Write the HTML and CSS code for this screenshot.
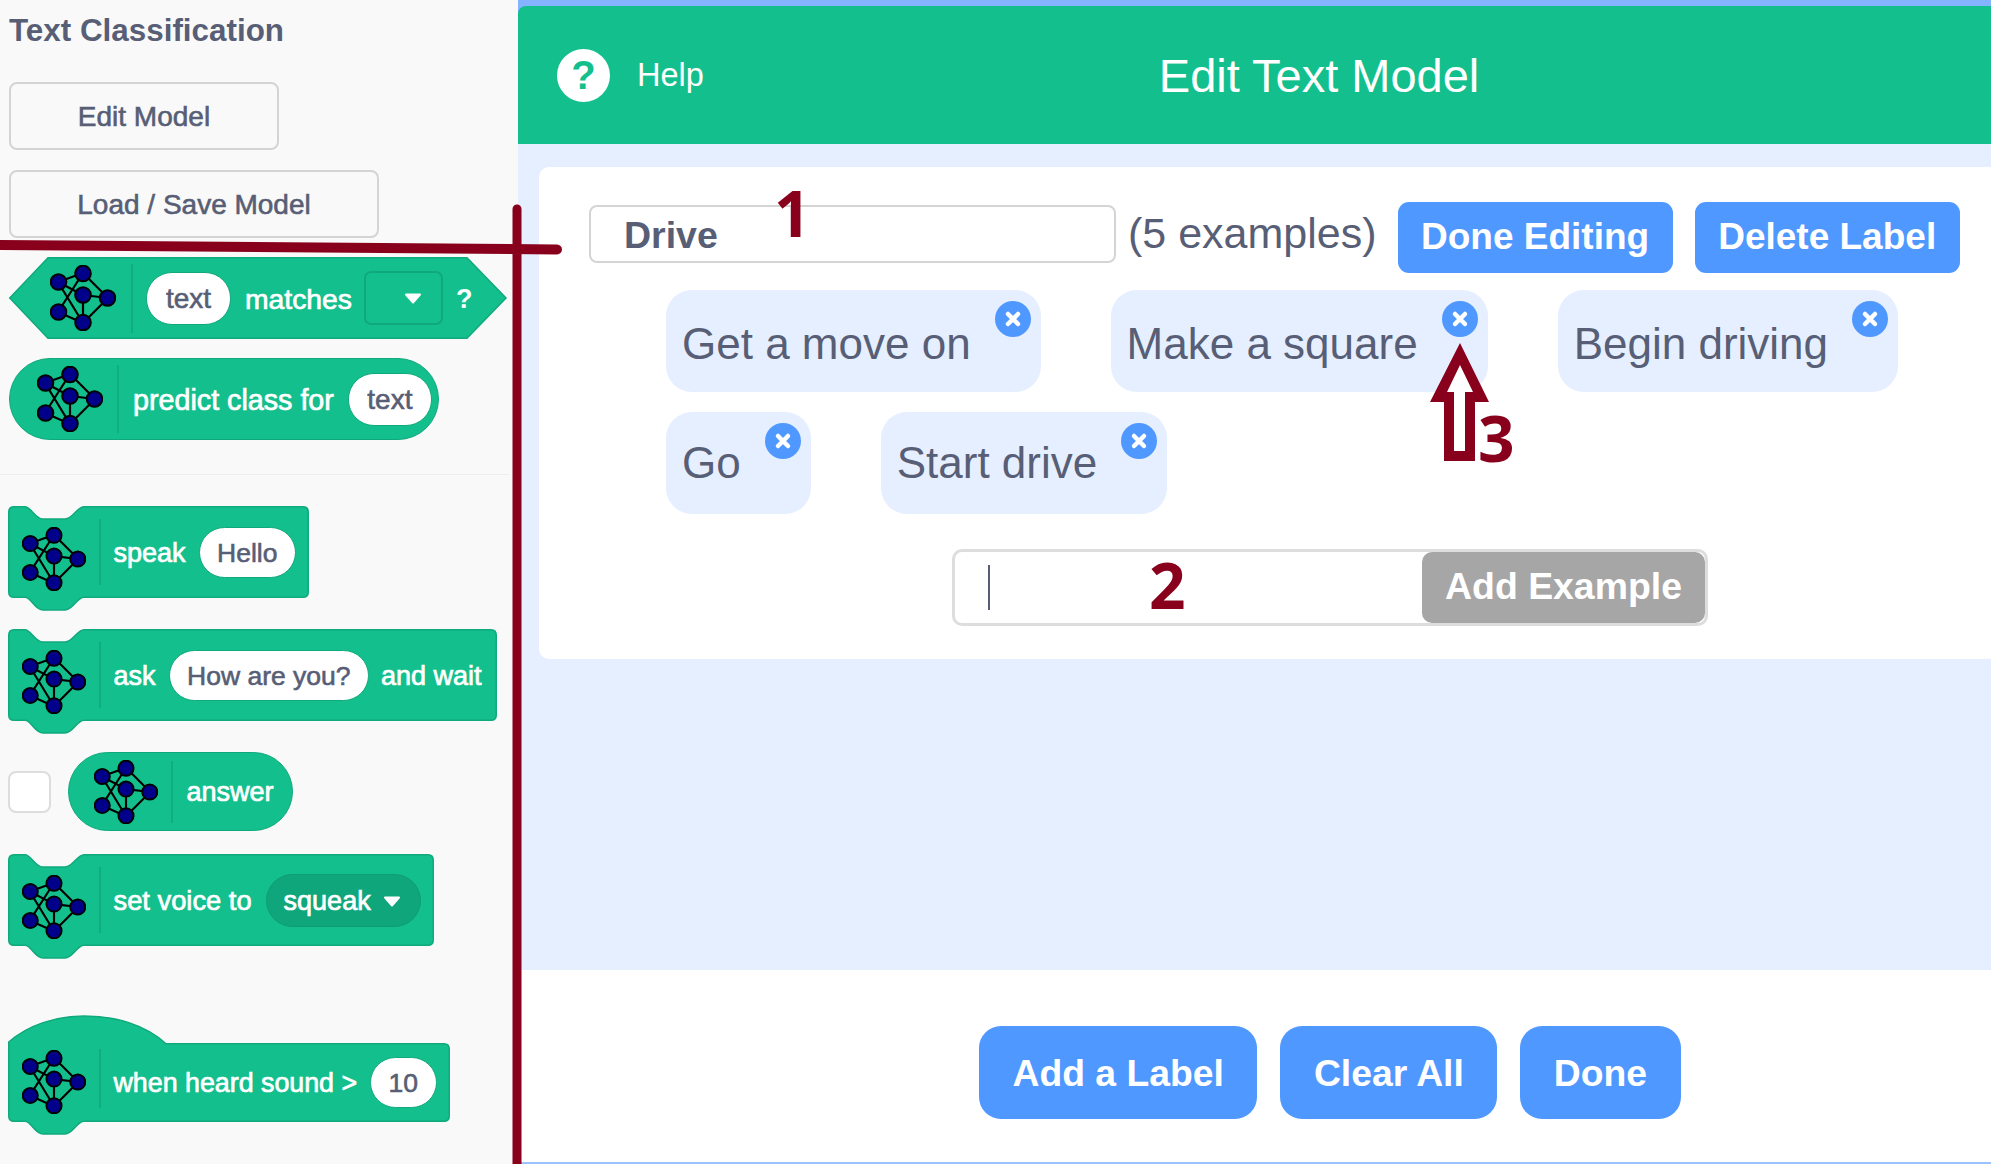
FILE: index.html
```html
<!doctype html>
<html lang="en">

<head>
    <meta charset="UTF-8">
    <meta name="viewport" content="width=device-width, initial-scale=1.0">
    <title>Edit Text Model</title>
    <link rel="stylesheet" href="styles.css">
</head>

<body>
    <svg class="defs" width="0" height="0">
        <symbol id="net" viewBox="0 0 66 66">
            <g stroke="#000" stroke-width="2.200" fill="none">
                <path d="M8 17L33 8M8 17L33 30M8 17L33 58M33 8L8 47M33 8L58 33M33 30L58 33M33 30V58M8 47L33 58M58 33L33 58" />
            </g>
            <g fill="#00008b" stroke="#000" stroke-width="2">
                <circle cx="8.500" cy="17" r="7.800" />
                <circle cx="33" cy="8.500" r="7.800" />
                <circle cx="33" cy="30" r="7.800" />
                <circle cx="57.500" cy="33" r="7.800" />
                <circle cx="8.500" cy="47" r="7.800" />
                <circle cx="33" cy="57.500" r="7.800" />
            </g>
        </symbol>
        <symbol id="caret" viewBox="0 0 18 11">
            <path d="M2 1.500H16L9 9.500Z" fill="#fff" stroke="#fff" stroke-width="2" stroke-linejoin="round" />
        </symbol>
        <symbol id="cross" viewBox="0 0 36 36">
            <circle cx="18" cy="18" r="18" fill="#4f98ff" />
            <path d="M13 13L23 23M23 13L13 23" stroke="#fff" stroke-width="4.500" stroke-linecap="round" />
        </symbol>
    </svg>

    <aside class="palette">
        <h2 class="palette-title">Text Classification</h2>
        <button class="plain-btn edit-btn">Edit Model</button>
        <button class="plain-btn save-btn">Load / Save Model</button>

        <div class="block bool-block">
            <svg class="shape" width="498" height="82">
                <path d="M.75 41L39 .75H458L497 41L458 81.250H39Z" />
            </svg>
            <svg class="net"><use href="#net" /></svg>
            <span class="sep"></span>
            <span class="pill">text</span>
            <span class="label">matches</span>
            <span class="menu"><svg class="caret"><use href="#caret" /></svg></span>
            <span class="label question">?</span>
        </div>

        <div class="block round-block predict-block">
            <svg class="net"><use href="#net" /></svg>
            <span class="sep"></span>
            <span class="label">predict class for</span>
            <span class="pill">text</span>
        </div>

        <hr class="palette-line">

        <div class="block stack speak-block">
            <svg class="shape" width="301" height="92">
                <path d="M.75 6Q.75 .75 6 .75H17C23 .75 27 13 35 13H57C65 13 69 .75 76 .75H295Q300.250 .75 300.250 6V86Q300.250 91.250 295 91.250H76C69 91.250 65 104 57 104H35C27 104 23 91.250 17 91.250H6Q.75 91.250 .75 86Z" />
            </svg>
            <svg class="net"><use href="#net" /></svg>
            <span class="sep"></span>
            <span class="label">speak</span>
            <span class="pill">Hello</span>
        </div>

        <div class="block stack ask-block">
            <svg class="shape" width="489" height="92">
                <path d="M.75 6Q.75 .75 6 .75H17C23 .75 27 13 35 13H57C65 13 69 .75 76 .75H483Q488.250 .75 488.250 6V86Q488.250 91.250 483 91.250H76C69 91.250 65 104 57 104H35C27 104 23 91.250 17 91.250H6Q.75 91.250 .75 86Z" />
            </svg>
            <svg class="net"><use href="#net" /></svg>
            <span class="sep"></span>
            <span class="label">ask</span>
            <span class="pill">How are you?</span>
            <span class="label">and wait</span>
        </div>

        <div class="answer-row">
            <span class="check"></span>
            <div class="block round-block answer-block">
                <svg class="net"><use href="#net" /></svg>
                <span class="sep"></span>
                <span class="label">answer</span>
            </div>
        </div>

        <div class="block stack voice-block">
            <svg class="shape" width="426" height="92">
                <path d="M.75 6Q.75 .75 6 .75H17C23 .75 27 13 35 13H57C65 13 69 .75 76 .75H420Q425.250 .75 425.250 6V86Q425.250 91.250 420 91.250H76C69 91.250 65 104 57 104H35C27 104 23 91.250 17 91.250H6Q.75 91.250 .75 86Z" />
            </svg>
            <svg class="net"><use href="#net" /></svg>
            <span class="sep"></span>
            <span class="label">set voice to</span>
            <span class="voice-menu">squeak<svg class="caret"><use href="#caret" /></svg></span>
        </div>

        <div class="block stack hat when-block">
            <svg class="shape" width="442" height="79">
                <path d="M.75 -1C20 -18 48 -27 76 -27C108 -27 138 -18 158 .75H436Q441.250 .75 441.250 6V73Q441.250 78.250 436 78.250H76C69 78.250 65 91 57 91H35C27 91 23 78.250 17 78.250H6Q.75 78.250 .75 73Z" />
            </svg>
            <svg class="net"><use href="#net" /></svg>
            <span class="sep"></span>
            <span class="label">when heard sound &gt;</span>
            <span class="pill">10</span>
        </div>
    </aside>

    <main class="modal">
        <header class="modal-head">
            <span class="help-icon">?</span>
            <span class="help-text">Help</span>
            <span class="modal-title">Edit Text Model</span>
        </header>

        <div class="modal-body">
            <section class="card">
                <div class="label-row">
                    <div class="name-input">Drive</div>
                    <span class="count">(5 examples)</span>
                    <button class="blue-btn">Done Editing</button>
                    <button class="blue-btn">Delete Label</button>
                </div>

                <div class="chips">
                    <div class="chip chip-top">Get a move on<svg class="chip-x"><use href="#cross" /></svg></div>
                    <div class="chip chip-top">Make a square<svg class="chip-x"><use href="#cross" /></svg></div>
                    <div class="chip chip-top">Begin driving<svg class="chip-x"><use href="#cross" /></svg></div>
                    <div class="chip">Go<svg class="chip-x"><use href="#cross" /></svg></div>
                    <div class="chip">Start drive<svg class="chip-x"><use href="#cross" /></svg></div>
                </div>

                <div class="example-input">
                    <span class="text-caret"></span>
                    <span class="add-example">Add Example</span>
                </div>
            </section>
        </div>

        <footer class="modal-foot">
            <button class="foot-btn">Add a Label</button>
            <button class="foot-btn">Clear All</button>
            <button class="foot-btn">Done</button>
        </footer>
    </main>

    <svg class="marks" width="1991" height="1164">
        <path d="M-5 245L557 249.500" stroke="#88001b" stroke-width="10" stroke-linecap="round" fill="none" />
        <path d="M517 209V1170" stroke="#88001b" stroke-width="9" stroke-linecap="round" fill="none" />
        <path d="M1460 343L1489 402H1475V461H1444V402H1430Z" fill="#88001b" />
        <path d="M1460 365L1473 392H1465V451H1454V392H1447Z" fill="#fff" />
    </svg>
    <span class="mark mark-one">1</span>
    <span class="mark mark-two">2</span>
    <span class="mark mark-three">3</span>
</body>

</html>
```
FILE: styles.css
```css
* {
    box-sizing: border-box;
    font-family: "Liberation Sans", Arial, sans-serif;
}

html,
body {
    margin: 0;
    height: 100%;
}

body {
    position: relative;
    display: flex;
    width: 1991px;
    height: 1164px;
    overflow: hidden;
    color: #575e75;
    background-color: #f9f9f9;
}

.defs {
    position: absolute;
}

/* palette on the left */
.palette {
    flex: none;
    width: 518px;
    padding: 12px 0 0 9px;
    background-color: #f9f9f9;
}

.palette-title {
    margin: 0 0 32px;
    font-size: 31.400px;
    line-height: 38px;
    font-weight: bold;
}

.plain-btn {
    display: block;
    height: 68px;
    padding: 2px 0 0;
    border: 2px solid #d4d4d4;
    border-radius: 8px;
    background: #f9f9f9;
    color: #575e75;
    font-size: 28px;
    -webkit-text-stroke: 0.6px #575e75;
}

.edit-btn {
    width: 270px;
    margin-bottom: 20px;
}

.save-btn {
    width: 370px;
    margin-bottom: 19px;
}

.block {
    position: relative;
    display: flex;
    align-items: center;
    color: #fff;
}

.block > * {
    position: relative;
}

.shape {
    position: absolute;
    left: 0;
    top: 0;
    overflow: visible;
}

.shape path {
    fill: #13bf8c;
    stroke: #10a97c;
    stroke-width: 1.500;
}

.net {
    flex: none;
    width: 64px;
    height: 64px;
}

.sep {
    flex: none;
    width: 2px;
    height: 66px;
    margin: 0 13px 0 13px;
    background-color: #10ad80;
}

.label {
    padding-top: 2px;
    font-size: 27px;
    white-space: nowrap;
    -webkit-text-stroke: 0.7px #fff;
}

.pill {
    flex: none;
    height: 51px;
    padding: 0 17.500px;
    border: 1px solid #10a97c;
    border-radius: 26px;
    background-color: #fff;
    color: #575e75;
    font-size: 26.500px;
    line-height: 50px;
    text-align: center;
    -webkit-text-stroke: 0.6px #575e75;
}

/* hexagon block */
.bool-block {
    width: 498px;
    height: 82px;
    margin-bottom: 19px;
    padding-left: 41px;
}

.bool-block .net {
    width: 66px;
    height: 66px;
}

.bool-block .label {
    font-size: 28.300px;
}

.predict-block .label {
    font-size: 28.700px;
}

.bool-block .sep {
    height: 69px;
    margin: 0 13px 0 15px;
}

.bool-block .pill {
    width: 85px;
    height: 53px;
    margin-right: 14px;
    padding: 0;
    line-height: 52px;
    font-size: 28px;
}

.menu {
    display: flex;
    align-items: center;
    justify-content: center;
    width: 79px;
    height: 54px;
    margin: 0 13px 0 12px;
    padding-left: 20px;
    border: 2px solid #10a97c;
    border-radius: 7px;
}

.bool-block .question {
    font-size: 27px;
    font-weight: bold;
    -webkit-text-stroke: 0;
}

.caret {
    width: 18px;
    height: 11px;
}

/* round blocks */
.round-block {
    border: 1.500px solid #10a97c;
    background-color: #13bf8c;
}

.predict-block {
    width: 430px;
    height: 82px;
    padding-left: 27px;
    border-radius: 41px;
}

.predict-block .net {
    width: 66px;
    height: 66px;
}

.predict-block .sep {
    height: 68px;
    margin: 0 14px 0 14px;
}

.predict-block .pill {
    width: 84px;
    height: 53px;
    margin-left: 14px;
    padding: 0;
    font-size: 28px;
    line-height: 52px;
}

.palette-line {
    width: 509px;
    height: 1px;
    margin: 34px 0 31px -9px;
    border: 0;
    background-color: #eeeeee;
}

/* stack blocks */
.stack {
    height: 92px;
    margin-bottom: 31px;
    margin-left: -1.500px;
    padding-left: 14px;
}

.stack .net {
    margin-top: 14px;
}

.stack .pill {
    margin-left: 13px;
}

.speak-block {
    width: 301px;
}

.ask-block {
    width: 489px;
}

.ask-block .label:last-child {
    margin-left: 12px;
}

.answer-row {
    display: flex;
    align-items: center;
    height: 79px;
    margin-bottom: 23px;
    margin-left: -1.500px;
}

.check {
    flex: none;
    width: 43px;
    height: 42px;
    margin-right: 17px;
    border: 2px solid #dddddd;
    border-radius: 8px;
    background-color: #fff;
}

.answer-block {
    width: 225px;
    height: 79px;
    padding-left: 25px;
    border-radius: 40px;
}

.answer-block .sep {
    height: 62px;
    margin-right: 14px;
}

.voice-block {
    width: 426px;
    margin-bottom: 96.500px;
}

.voice-block .label {
    font-size: 27.300px;
}

.voice-menu {
    display: flex;
    align-items: center;
    justify-content: space-between;
    width: 155px;
    height: 53px;
    margin-left: 14px;
    padding: 2px 19px 0 17px;
    border: 1px solid #0f9c74;
    border-radius: 27px;
    background-color: #10a67b;
    font-size: 27px;
    -webkit-text-stroke: 0.7px #fff;
}

.when-block {
    width: 442px;
    height: 79px;
    margin-bottom: 0;
}

.when-block .net {
    margin-top: 0;
}

.when-block .sep {
    height: 59px;
    margin-top: -7px;
}

.when-block .label {
    font-size: 26.800px;
}

.when-block .pill {
    margin-left: 13px;
}

/* modal on the right */
.modal {
    display: flex;
    flex: 1;
    flex-direction: column;
    padding-top: 6px;
    background-color: #84b3ff;
}

.modal-head {
    display: flex;
    flex: none;
    align-items: center;
    height: 138px;
    padding-left: 39px;
    border-radius: 8px 0 0 0;
    background-color: #13bf8c;
    color: #fff;
}

.help-icon {
    display: flex;
    align-items: center;
    justify-content: center;
    width: 53px;
    height: 53px;
    border-radius: 50%;
    background-color: #fff;
    color: #13bf8c;
    font-size: 40px;
    font-weight: bold;
}

.help-text {
    margin-left: 27px;
    font-size: 32.500px;
}

.modal-title {
    margin-left: 455px;
    font-size: 47px;
}

.modal-body {
    flex: 1;
    padding: 23px 0 0 21px;
    background-color: #e5efff;
}

.card {
    height: 492px;
    padding: 35px 0 0 51px;
    border-radius: 10px 0 0 10px;
    background-color: #fff;
}

.label-row {
    display: flex;
    align-items: flex-start;
}

.name-input {
    width: 527px;
    height: 58px;
    margin: 3px 0 0 -1px;
    padding-left: 33px;
    border: 2px solid #d4d4d4;
    border-radius: 8px;
    font-size: 37.500px;
    line-height: 56px;
    font-weight: bold;
}

.count {
    margin: 0 21px 0 12px;
    font-size: 43px;
    line-height: 62px;
    white-space: nowrap;
}

.blue-btn {
    height: 71px;
    margin-right: 22px;
    padding: 0 23.500px 2px;
    border: 0;
    border-radius: 11px;
    background-color: #4f98ff;
    color: #fff;
    font-size: 37px;
    font-weight: bold;
    white-space: nowrap;
}

.chips {
    display: flex;
    flex-wrap: wrap;
    gap: 20px 70px;
    width: 1300px;
    margin: 17px 0 0 76px;
}

.chip {
    position: relative;
    height: 102px;
    padding: 0 70px 0 16px;
    border-radius: 26px;
    background-color: #e5efff;
    font-size: 44px;
    line-height: 101px;
    white-space: nowrap;
}

.chip-top {
    line-height: 108px;
}

.chip-x {
    position: absolute;
    right: 10px;
    top: 11px;
    width: 36px;
    height: 36px;
}

.example-input {
    display: flex;
    align-items: center;
    justify-content: space-between;
    width: 756px;
    height: 77px;
    margin: 35px 0 0 362px;
    padding-left: 33px;
    border: 3px solid #dddddd;
    border-radius: 10px;
}

.text-caret {
    width: 2px;
    height: 45px;
    background-color: #575e75;
}

.add-example {
    display: flex;
    align-items: center;
    justify-content: center;
    width: 283px;
    height: 71px;
    padding-bottom: 2px;
    border-radius: 10px;
    background-color: #a6a6a6;
    color: #fff;
    font-size: 37.400px;
    font-weight: bold;
}

.modal-foot {
    display: flex;
    flex: none;
    align-items: flex-start;
    gap: 23px;
    height: 194px;
    padding: 56px 0 0 461px;
    border-bottom: 2px solid #9cc3ff;
    background-color: #fff;
}

.foot-btn {
    height: 93px;
    padding: 2px 33.500px 0;
    border: 0;
    border-radius: 22px;
    background-color: #4f98ff;
    color: #fff;
    font-size: 37.300px;
    font-weight: bold;
    white-space: nowrap;
}

/* red annotations drawn over the screenshot */
.marks {
    position: absolute;
    left: 0;
    top: 0;
}

.mark {
    position: absolute;
    color: #88001b;
    font-family: "Open Sans", sans-serif;
    font-size: 64px;
    font-weight: bold;
    line-height: 64px;
}

.mark-one {
    left: 774px;
    top: 181px;
}

.mark-two {
    left: 1149px;
    top: 553px;
}

.mark-three {
    left: 1478px;
    top: 406px;
}
```
